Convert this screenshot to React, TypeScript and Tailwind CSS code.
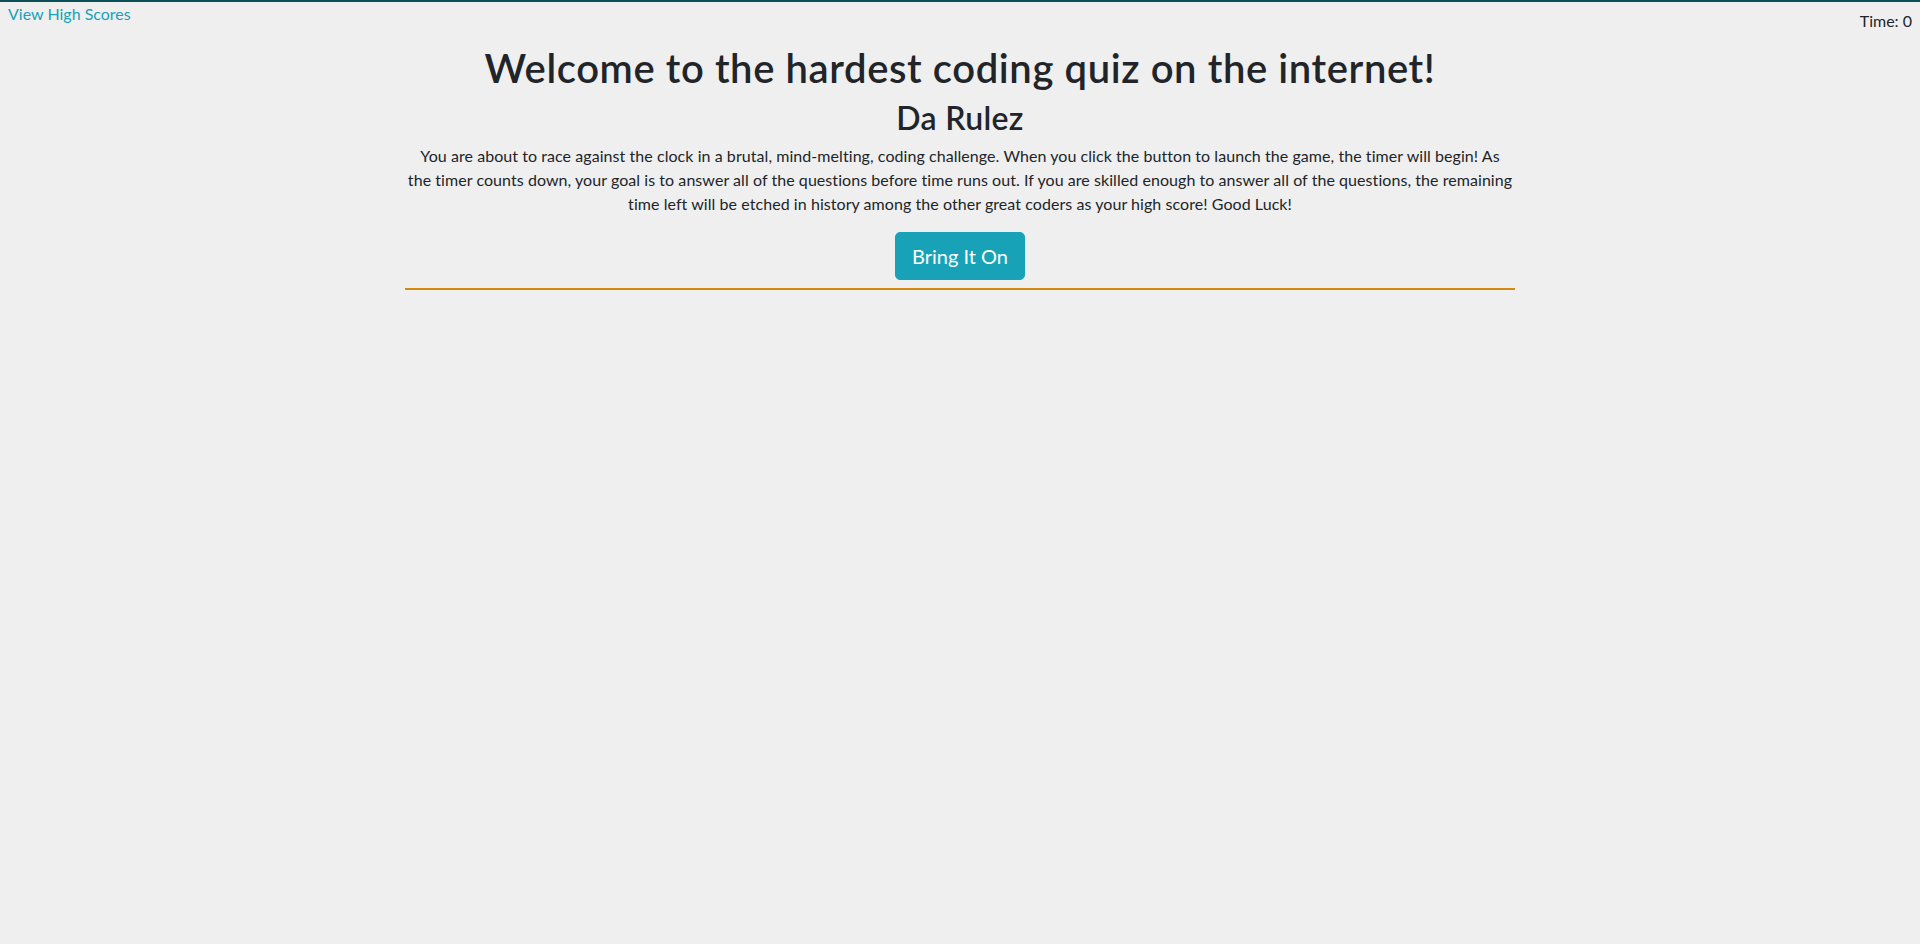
export default function App() {
  return (
    <div className="min-h-[944px] bg-[#efefef] border-t-2 border-[#0b4f57] font-['Lato',sans-serif] text-[#212529]">
      {/* Top bar */}
      <div className="flex justify-between items-start px-2 h-[42px]">
        <a href="#" className="text-[#17a2b8] text-base leading-6">
          View High Scores
        </a>
        <div className="text-base leading-6 mt-[7px]">Time: 0</div>
      </div>

      {/* Intro */}
      <div className="w-[1140px] mx-auto px-[15px]">
        <div className="text-center">
          <h1 className="text-[40px] leading-[48px] font-semibold tracking-[0.6px] mb-[7px]">
            Welcome to the hardest coding quiz on the internet!
          </h1>
          <h2 className="text-[32px] leading-[38px] font-semibold tracking-[0.3px] mb-[7px]">Da Rulez</h2>
          <p className="text-base leading-6 mb-4 tracking-[0.06px] whitespace-nowrap">
            You are about to race against the clock in a brutal, mind-melting, coding challenge. When you
            click the button to launch the game, the timer will begin! As
            <br />
            the timer counts down, your goal is to answer all of the questions before time runs out. If you
            are skilled enough to answer all of the questions, the remaining
            <br />
            time left will be etched in history among the other great coders as your high score! Good Luck!
          </p>
          <button className="bg-[#17a2b8] border border-[#17a2b8] text-white text-xl leading-[30px] px-4 py-2 rounded-[5px]">
            Bring It On
          </button>
        </div>
        <hr className="mt-2 border-0 border-t-2 border-[#d4890f]" />
      </div>
    </div>
  );
}
